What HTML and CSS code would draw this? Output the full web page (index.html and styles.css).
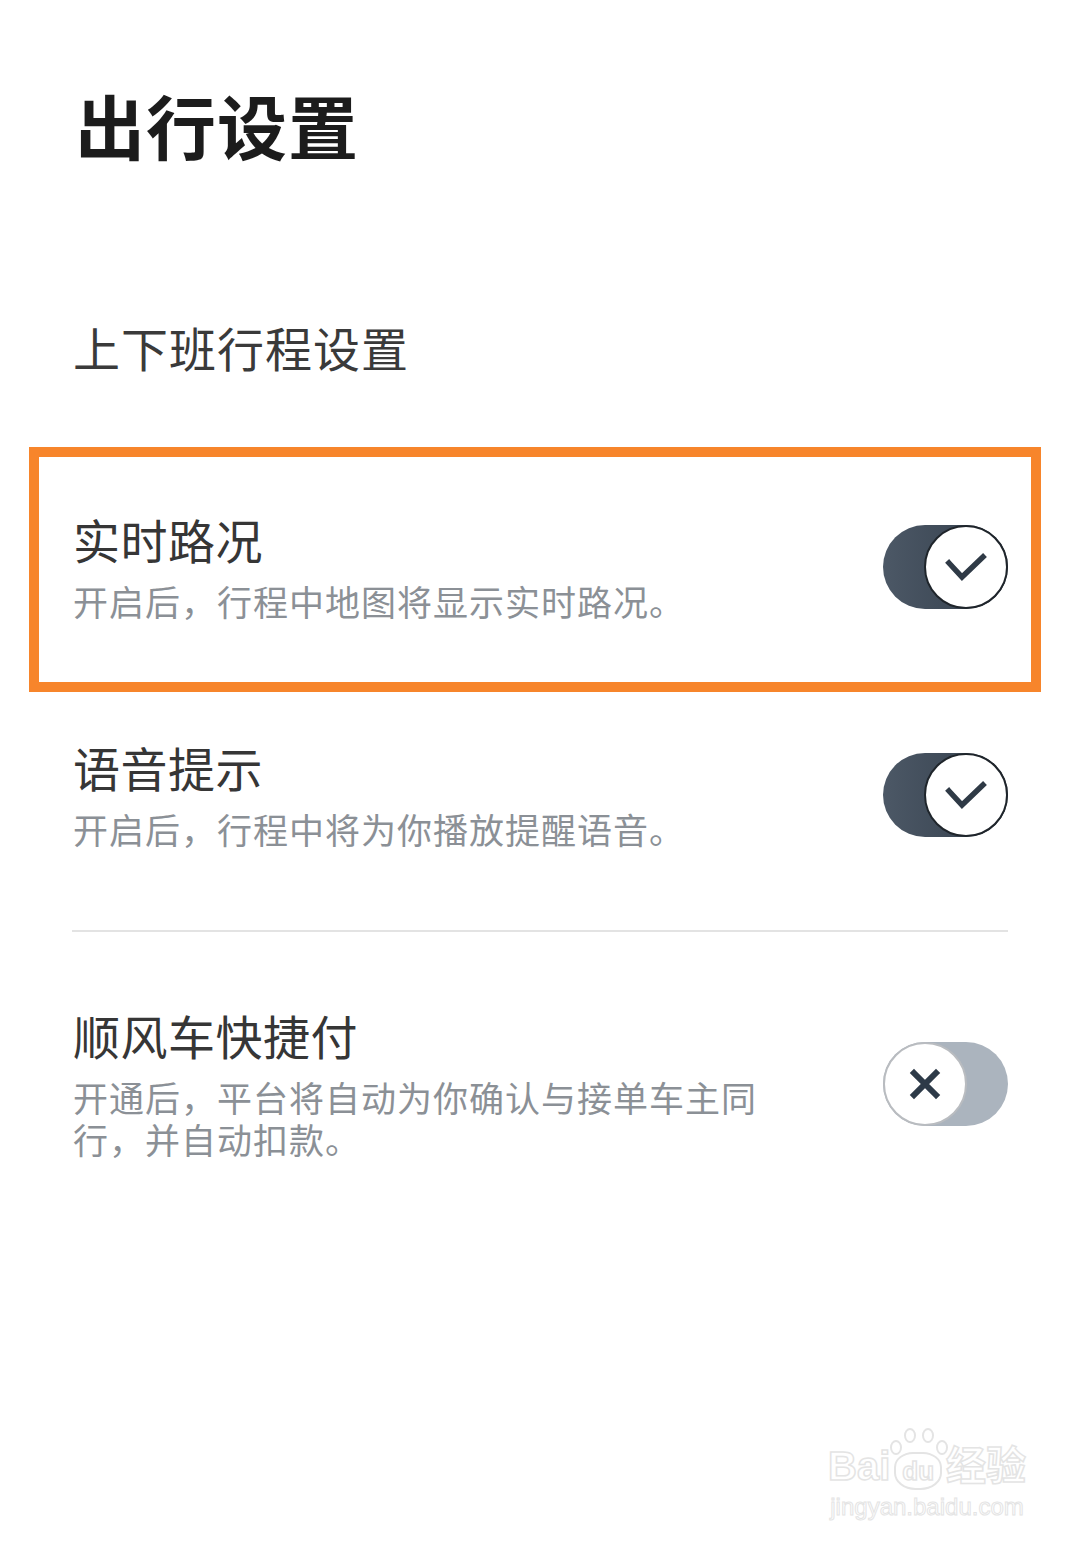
FILE: index.html
```html
<!DOCTYPE html>
<html lang="zh-CN">
<head>
    <meta charset="UTF-8">
    <meta name="viewport" content="width=device-width, initial-scale=1.0">
    <title>出行设置</title>
    <link rel="stylesheet" href="styles.css">
</head>
<body>
    <div class="page">
        <h1 class="page-title">出行设置</h1>

        <div class="section-title">上下班行程设置</div>

        <div class="highlight">
            <div class="setting">
                <div class="setting-text">
                    <div class="setting-name">实时路况</div>
                    <div class="setting-desc">开启后，行程中地图将显示实时路况。</div>
                </div>
                <div class="toggle on">
                    <span class="knob">
                        <svg viewBox="0 0 84 84" width="84" height="84"><path d="M25 38 L38 52 L59 32" fill="none" stroke="#2f3a46" stroke-width="5.5" stroke-linecap="square" stroke-linejoin="miter"/></svg>
                    </span>
                </div>
            </div>
        </div>

        <div class="setting second">
            <div class="setting-text">
                <div class="setting-name">语音提示</div>
                <div class="setting-desc">开启后，行程中将为你播放提醒语音。</div>
            </div>
            <div class="toggle on">
                <span class="knob">
                    <svg viewBox="0 0 84 84" width="84" height="84"><path d="M25 38 L38 52 L59 32" fill="none" stroke="#2f3a46" stroke-width="5.5" stroke-linecap="square" stroke-linejoin="miter"/></svg>
                </span>
            </div>
        </div>

        <div class="divider"></div>

        <div class="setting third">
            <div class="setting-text">
                <div class="setting-name">顺风车快捷付</div>
                <div class="setting-desc narrow">开通后，平台将自动为你确认与接单车主同行，并自动扣款。</div>
            </div>
            <div class="toggle off">
                <span class="knob">
                    <svg viewBox="0 0 84 84" width="84" height="84"><path d="M31 31 L53 53 M53 31 L31 53" fill="none" stroke="#2d3a48" stroke-width="6" stroke-linecap="square"/></svg>
                </span>
            </div>
        </div>
    </div>

    <div class="watermark">
        <div class="wm-logo">Bai<span class="wm-du">du<i class="paw p1"></i><i class="paw p2"></i><i class="paw p3"></i><i class="paw p4"></i></span>经验</div>
        <div class="wm-url">jingyan.baidu.com</div>
    </div>
</body>
</html>
```

FILE: styles.css
```css
* {
    margin: 0;
    padding: 0;
    box-sizing: border-box;
}

body {
    background: #fff;
    font-family: "Noto Sans CJK SC", "Noto Sans", sans-serif;
    color: #333;
    width: 1080px;
    height: 1554px;
    position: relative;
    overflow: hidden;
}

.page {
    padding: 83px 72px 0 72px;
}

.page-title {
    font-size: 70px;
    line-height: 84px;
    font-weight: 700;
    color: #1c1c1c;
    padding-left: 3px;
    letter-spacing: 1px;
}

.section-title {
    margin-top: 152px;
    font-size: 47px;
    line-height: 56px;
    color: #3a3a3a;
    padding-left: 1px;
    letter-spacing: 1px;
}

.highlight {
    margin: 72px -33px 0 -43px;
    border: 10px solid #f7852b;
    padding: 54px 23px 60px 33px;
}

.setting {
    display: flex;
    align-items: center;
    justify-content: space-between;
}

.setting.second {
    margin-top: 47px;
}

.setting.third {
    margin-top: 75px;
}

.setting-text {
    padding-left: 1px;
}

.setting-name {
    font-size: 47px;
    line-height: 56px;
    color: #363636;
    letter-spacing: 0.5px;
}

.setting-desc {
    margin-top: 13px;
    font-size: 35px;
    line-height: 42px;
    color: #8b9096;
    letter-spacing: 1px;
}

.setting-desc.narrow {
    max-width: 700px;
}

.divider {
    margin-top: 80px;
    height: 2px;
    background: #e3e3e3;
}

.toggle {
    width: 125px;
    height: 84px;
    border-radius: 42px;
    display: flex;
    flex-shrink: 0;
}

.toggle.on {
    background: linear-gradient(90deg, #4c5866, #333e4b);
    justify-content: flex-end;
}

.toggle.off {
    background: #abb4be;
    justify-content: flex-start;
}

.knob {
    width: 84px;
    height: 84px;
    border-radius: 50%;
    background: #fff;
    position: relative;
}

.toggle.on .knob {
    border: 2px solid #1f252b;
}

.toggle.off .knob {
    border: 2px solid #b9bcc0;
}

.knob svg {
    position: absolute;
    left: -2px;
    top: -2px;
}

.watermark {
    position: absolute;
    left: 828px;
    top: 1440px;
    text-align: center;
    color: #fff;
    -webkit-text-stroke: 1.5px #e4e4e4;
}

.wm-logo {
    font-family: "Liberation Sans", "Noto Sans CJK SC", sans-serif;
    font-size: 40px;
    line-height: 52px;
    font-weight: 700;
}

.wm-du {
    position: relative;
    font-size: 26px;
    display: inline-block;
    border: 2px solid #e4e4e4;
    border-radius: 40% 40% 45% 45%;
    padding: 0 6px;
    margin: 0 4px;
    line-height: 34px;
}

.paw {
    position: absolute;
    width: 12px;
    height: 15px;
    border: 2px solid #e4e4e4;
    border-radius: 50%;
}

.p1 { left: -6px; top: -14px; }
.p2 { left: 8px; top: -26px; }
.p3 { left: 26px; top: -26px; }
.p4 { left: 40px; top: -14px; }

.wm-url {
    font-family: "Liberation Sans", sans-serif;
    font-size: 24px;
    line-height: 30px;
    -webkit-text-stroke: 1px #e4e4e4;
}
```
